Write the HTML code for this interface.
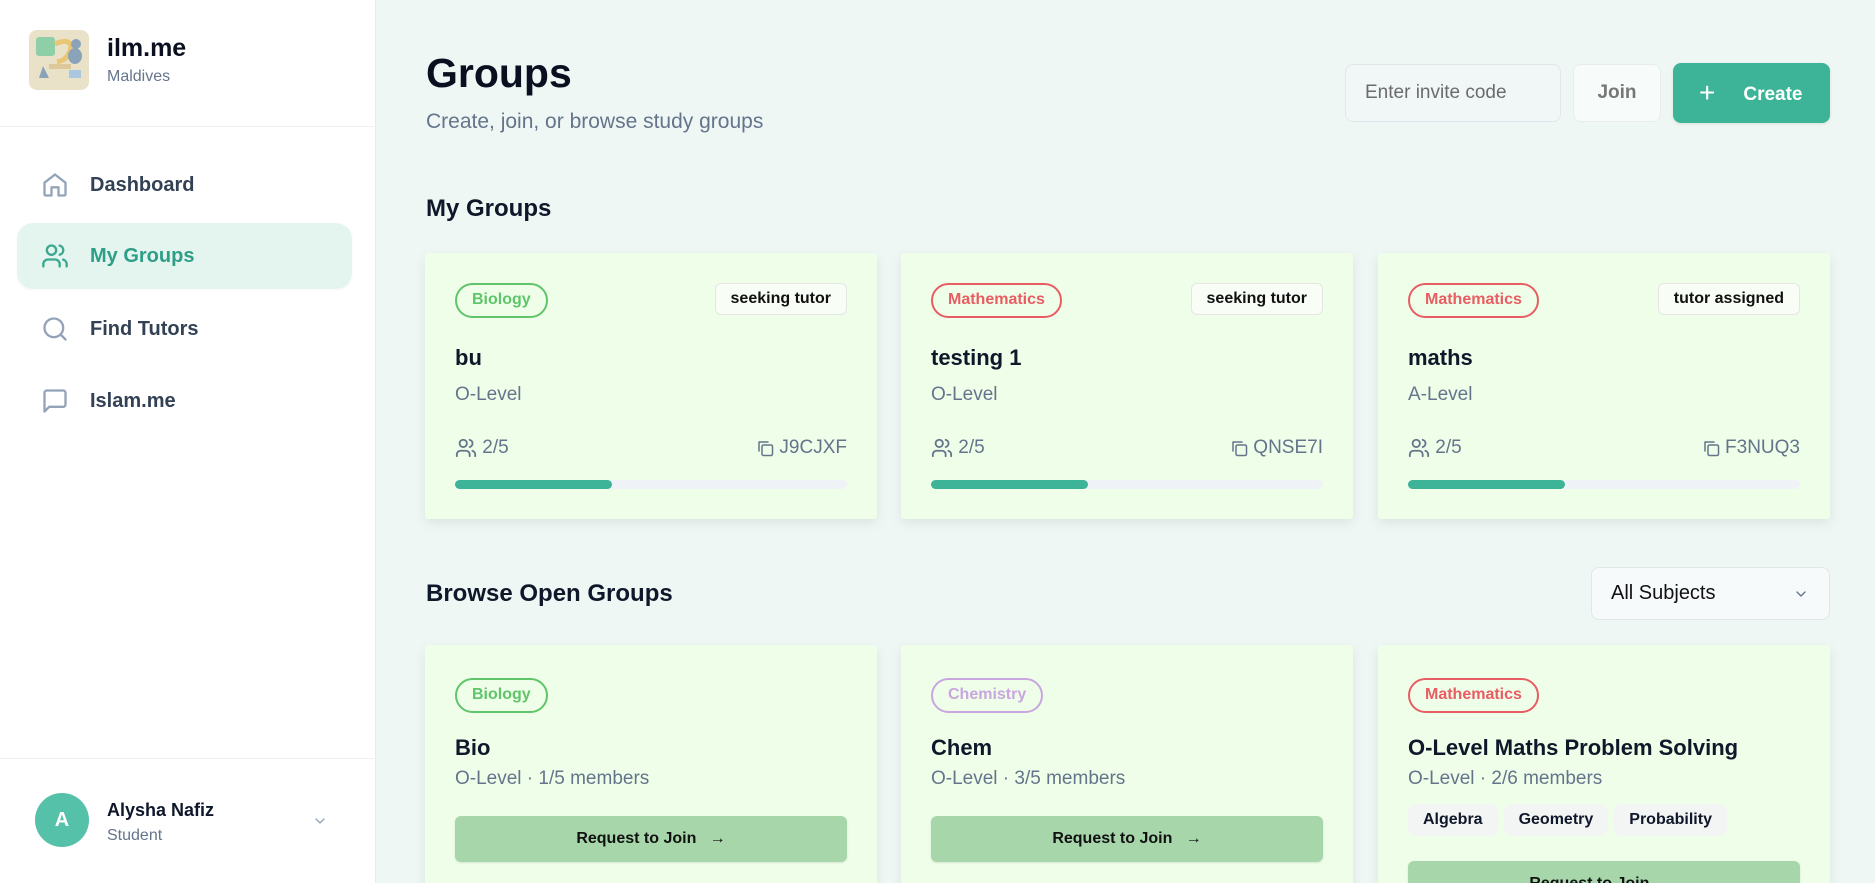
<!DOCTYPE html>
<html style="overflow:hidden;height:883px"><head><meta charset="utf-8"><style>
*{box-sizing:border-box;margin:0;padding:0}
html,body{overflow:hidden}
body{width:1875px;height:883px;font-family:"Liberation Sans",sans-serif;background:#eff7f5;position:relative;color:#0f172a}
.sb{position:absolute;left:0;top:0;width:376px;height:883px;background:#fff;border-right:1px solid #e6ebf0;z-index:2}
.logo{position:absolute;left:29px;top:30px;width:60px;height:60px;border-radius:8px;background:#e9e2c9;overflow:hidden}
.brand{position:absolute;left:107px;top:34px;font-size:25px;font-weight:bold;color:#0b1020}
.loc{position:absolute;left:107px;top:68px;font-size:16px;color:#64748b}
.hdiv{position:absolute;left:0;top:126px;width:376px;border-top:1px solid #eef1f5}
.nav{position:absolute;left:17px;width:335px;height:66px;display:flex;align-items:center;padding-left:24px;font-size:20px;color:#334155;font-weight:600}
.nav svg{width:28px;height:28px;margin-right:21px;fill:none;stroke:#94a3b8;stroke-width:2;stroke-linecap:round;stroke-linejoin:round}
.nav.act{background:#e4f5f0;border-radius:16px;color:#2f9e86;box-shadow:0 1px 3px rgba(0,0,0,.04)}
.nav.act svg{stroke:#3aa98f}
.bdiv{position:absolute;left:0;top:758px;width:376px;border-top:1px solid #eef1f5}
.av{position:absolute;left:35px;top:793px;width:54px;height:54px;border-radius:50%;background:#55c1a9;color:#fff;font-size:20px;font-weight:bold;display:flex;align-items:center;justify-content:center}
.main{position:absolute;left:376px;top:0;width:1499px;height:883px;overflow:hidden}
h1{position:absolute;left:50px;top:50px;font-size:41px;font-weight:bold;color:#0b1020}
.sub{position:absolute;left:50px;top:110px;font-size:21px;color:#64748b}
.inp{position:absolute;left:969px;top:64px;width:216px;height:58px;border:1px solid #e2e6ea;border-radius:8px;background:#f0f7f6;font-size:19px;color:#6b6b6b;padding:17px 19px}
.join{position:absolute;left:1197px;top:64px;width:88px;height:58px;border:1px solid #e8ecef;border-radius:8px;background:#f7fbfa;font-size:19px;color:#777;font-weight:600;text-align:center;line-height:56px}
.create{position:absolute;left:1297px;top:63px;width:157px;height:60px;border-radius:8px;background:#3db497;color:#fff;font-size:19px;font-weight:600;line-height:60px;padding-left:26px;box-shadow:0 1px 3px rgba(0,0,0,.1)}
h2{position:absolute;left:50px;font-size:24px;font-weight:600;color:#0f172a}
.card{position:absolute;width:452px;background:#effee9;box-shadow:0 4px 12px rgba(0,0,0,.08);border-radius:3px}
.badge{position:absolute;left:30px;top:30px;height:35px;border:2.5px solid;border-radius:18px;font-size:16px;font-weight:600;padding:0 15px;line-height:30px}
.bio{border-color:#5fc46a;color:#5fc46a}.math{border-color:#e85d63;color:#e85d63}.chem{border-color:#c9a6e0;color:#c9a6e0}
.st{position:absolute;right:30px;top:30px;height:32px;border:1px solid #e3e6e3;border-radius:6px;background:#f8fdf6;font-size:16px;font-weight:600;padding:0 15px;line-height:30px;color:#111}
.ttl{position:absolute;left:30px;font-size:22px;font-weight:600;color:#0f172a}
.lvl{position:absolute;left:30px;font-size:19px;color:#64748b}
.mem{position:absolute;left:30px;top:184px;font-size:19px;color:#64748b;display:flex;align-items:center}
.code{position:absolute;right:30px;top:184px;font-size:19px;color:#64748b;display:flex;align-items:center}
.ic{fill:none;stroke:#64748b;stroke-width:2;stroke-linecap:round;stroke-linejoin:round}
.bar{position:absolute;left:30px;right:30px;top:227px;height:9px;border-radius:5px;background:#eff2f7}
.bar i{display:block;width:40%;height:9px;border-radius:5px;background:#3db497}
.btn{position:absolute;left:30px;right:30px;height:46px;border-radius:6px;background:#a7d6ab;box-shadow:0 1px 2px rgba(0,0,0,.1);font-size:16px;font-weight:600;text-align:center;line-height:46px;color:#111}
.tag{display:inline-block;height:32px;line-height:32px;padding:0 15px;background:#f3f4f4;border-radius:8px;font-size:16px;font-weight:600;margin-right:6px}
.sel{position:absolute;left:1215px;top:567px;width:239px;height:53px;border:1px solid #e2e6ea;border-radius:8px;background:#f6fafa;font-size:20px;padding:14px 19px;color:#111}
</style></head><body>
<div class="sb">
 <div class="logo"><svg width="60" height="60" viewBox="0 0 60 60"><rect x="7" y="7" width="19" height="19" rx="3" fill="#8fcfa8"/><path d="M26 14 Q40 8 42 16 Q40 30 28 32" stroke="#e8c676" stroke-width="5" fill="none"/><circle cx="47" cy="14" r="5" fill="#8aa3b8"/><ellipse cx="46" cy="26" rx="7" ry="8" fill="#8aa3b8"/><rect x="20" y="34" width="22" height="5" fill="#dcc89a"/><path d="M10 48 L14 36 L20 48 Z" fill="#8aa3b8"/><rect x="40" y="40" width="12" height="8" fill="#a9c8e0"/></svg></div>
 <div class="brand">ilm.me</div><div class="loc">Maldives</div>
 <div class="hdiv"></div>
 <div class="nav" style="top:152px"><svg viewBox="0 0 24 24"><path d="M3 10l9-7 9 7v10a1 1 0 0 1-1 1h-5v-7H9v7H4a1 1 0 0 1-1-1z"/></svg>Dashboard</div>
 <div class="nav act" style="top:223px"><svg viewBox="0 0 24 24"><circle cx="9" cy="7" r="4"/><path d="M2 21v-2a4 4 0 0 1 4-4h6a4 4 0 0 1 4 4v2M16 3.1a4 4 0 0 1 0 7.8M22 21v-2a4 4 0 0 0-3-3.9"/></svg>My Groups</div>
 <div class="nav" style="top:296px"><svg viewBox="0 0 24 24"><circle cx="11" cy="11" r="8"/><path d="M21 21l-4.3-4.3"/></svg>Find Tutors</div>
 <div class="nav" style="top:368px"><svg viewBox="0 0 24 24"><path d="M21 15a2 2 0 0 1-2 2H7l-4 4V5a2 2 0 0 1 2-2h14a2 2 0 0 1 2 2z"/></svg>Islam.me</div>
 <div class="bdiv"></div>
 <div class="av">A</div>
 <div style="position:absolute;left:107px;top:800px;font-size:18px;font-weight:bold">Alysha Nafiz</div>
 <div style="position:absolute;left:107px;top:827px;font-size:16px;color:#64748b">Student</div>
 <svg style="position:absolute;left:312px;top:813px" width="16" height="16" viewBox="0 0 24 24" class="ic"><path d="M6 9l6 6 6-6" stroke="#94a3b8"/></svg>
</div>
<div class="main">
 <h1>Groups</h1>
 <div class="sub">Create, join, or browse study groups</div>
 <div class="inp">Enter invite code</div>
 <div class="join">Join</div>
 <div class="create"><span style="font-size:28px;font-weight:300;margin-right:28px;vertical-align:-2px">+</span>Create</div>
 <h2 style="top:195px">My Groups</h2>

 <div class="card" style="left:49px;top:253px;height:266px">
  <div class="badge bio">Biology</div><div class="st">seeking tutor</div>
  <div class="ttl" style="top:92px">bu</div><div class="lvl" style="top:131px">O-Level</div>
  <div class="mem"><svg width="22" height="22" viewBox="0 0 24 24" class="ic"><circle cx="9" cy="7" r="4"/><path d="M2 21v-2a4 4 0 0 1 4-4h6a4 4 0 0 1 4 4v2M16 3.1a4 4 0 0 1 0 7.8M22 21v-2a4 4 0 0 0-3-3.9"/></svg>&nbsp;2/5</div>
  <div class="code"><svg width="18" height="18" viewBox="0 0 24 24" class="ic"><rect x="8" y="8" width="14" height="14" rx="2"/><path d="M4 16V4h12"/></svg>&nbsp;J9CJXF</div>
  <div class="bar"><i></i></div>
 </div>
 <div class="card" style="left:525px;top:253px;height:266px">
  <div class="badge math">Mathematics</div><div class="st">seeking tutor</div>
  <div class="ttl" style="top:92px">testing 1</div><div class="lvl" style="top:131px">O-Level</div>
  <div class="mem"><svg width="22" height="22" viewBox="0 0 24 24" class="ic"><circle cx="9" cy="7" r="4"/><path d="M2 21v-2a4 4 0 0 1 4-4h6a4 4 0 0 1 4 4v2M16 3.1a4 4 0 0 1 0 7.8M22 21v-2a4 4 0 0 0-3-3.9"/></svg>&nbsp;2/5</div>
  <div class="code"><svg width="18" height="18" viewBox="0 0 24 24" class="ic"><rect x="8" y="8" width="14" height="14" rx="2"/><path d="M4 16V4h12"/></svg>&nbsp;QNSE7I</div>
  <div class="bar"><i></i></div>
 </div>
 <div class="card" style="left:1002px;top:253px;height:266px">
  <div class="badge math">Mathematics</div><div class="st">tutor assigned</div>
  <div class="ttl" style="top:92px">maths</div><div class="lvl" style="top:131px">A-Level</div>
  <div class="mem"><svg width="22" height="22" viewBox="0 0 24 24" class="ic"><circle cx="9" cy="7" r="4"/><path d="M2 21v-2a4 4 0 0 1 4-4h6a4 4 0 0 1 4 4v2M16 3.1a4 4 0 0 1 0 7.8M22 21v-2a4 4 0 0 0-3-3.9"/></svg>&nbsp;2/5</div>
  <div class="code"><svg width="18" height="18" viewBox="0 0 24 24" class="ic"><rect x="8" y="8" width="14" height="14" rx="2"/><path d="M4 16V4h12"/></svg>&nbsp;F3NUQ3</div>
  <div class="bar"><i></i></div>
 </div>

 <h2 style="top:580px">Browse Open Groups</h2>
 <div class="sel">All Subjects<svg style="position:absolute;right:20px;top:18px" width="16" height="16" viewBox="0 0 24 24" class="ic"><path d="M6 9l6 6 6-6"/></svg></div>

 <div class="card" style="left:49px;top:645px;height:260px">
  <div class="badge bio" style="top:33px">Biology</div>
  <div class="ttl" style="top:90px">Bio</div><div class="lvl" style="top:123px">O-Level · 1/5 members</div>
  <div class="btn" style="top:171px">Request to Join &nbsp;&nbsp;→</div>
 </div>
 <div class="card" style="left:525px;top:645px;height:260px">
  <div class="badge chem" style="top:33px">Chemistry</div>
  <div class="ttl" style="top:90px">Chem</div><div class="lvl" style="top:123px">O-Level · 3/5 members</div>
  <div class="btn" style="top:171px">Request to Join &nbsp;&nbsp;→</div>
 </div>
 <div class="card" style="left:1002px;top:645px;height:260px">
  <div class="badge math" style="top:33px">Mathematics</div>
  <div class="ttl" style="top:90px">O-Level Maths Problem Solving</div><div class="lvl" style="top:123px">O-Level · 2/6 members</div>
  <div style="position:absolute;left:30px;top:159px"><span class="tag">Algebra</span><span class="tag">Geometry</span><span class="tag">Probability</span></div>
  <div class="btn" style="top:216px">Request to Join &nbsp;&nbsp;→</div>
 </div>
</div>
</body></html>
